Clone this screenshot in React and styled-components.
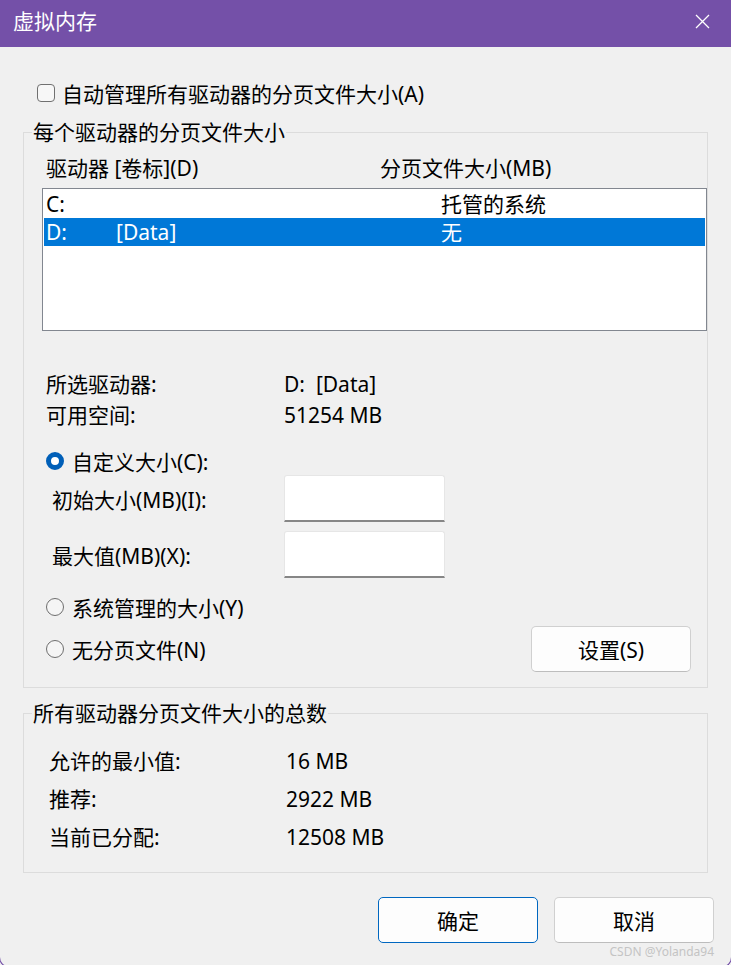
import React from 'react';
import styled, { createGlobalStyle } from 'styled-components';

const GlobalStyle = createGlobalStyle`
  html, body {
    margin: 0;
    padding: 0;
    overflow: hidden;
    background: #f0f0f0;
  }
  body {
    font-family: "Noto Sans", "Noto Sans CJK SC", sans-serif;
    font-size: 21px;
    color: #000;
  }
`;

const Window = styled.div`
  position: relative;
  height: 968px;
  margin: 0 -1px;
  box-sizing: border-box;
  border: 1px solid #7450a8;
  border-top: none;
  border-radius: 0 0 11px 11px;
  background: #f0f0f0;
  display: flex;
  flex-direction: column;
`;

const TitleBar = styled.div`
  height: 47px;
  background: #7450a8;
  color: #fff;
  display: flex;
  align-items: center;
  justify-content: space-between;
  padding: 0 21px 4px 13px;
  box-sizing: border-box;
`;

const Title = styled.span`
  font-size: 21px;
  line-height: 1;
`;

const CloseIcon = () => (
  <svg width="15" height="15" viewBox="0 0 15 15">
    <path d="M1 1L14 14M14 1L1 14" stroke="#fff" strokeWidth="1.3" fill="none" />
  </svg>
);

const Body = styled.div`
  padding: 0 23px;
  display: flex;
  flex-direction: column;
`;

const CheckRow = styled.label`
  display: flex;
  align-items: center;
  gap: 7px;
  height: 28px;
  margin: 32px 0 0 14px;
`;

const CheckBox = styled.span`
  width: 18px;
  height: 18px;
  box-sizing: border-box;
  border: 1px solid #707070;
  border-radius: 4px;
  background: #f7f7f7;
`;

const Group = styled.fieldset`
  margin: ${(p) => p.$top}px 0 0 0;
  padding: 0 0 ${(p) => p.$bottom}px 0;
  border: 1px solid #dcdcdc;
  min-width: 0;
`;

const Legend = styled.legend`
  margin-left: 8px;
  padding: 0 1px;
  height: 26px;
  line-height: 26px;
`;

const ListHeader = styled.div`
  display: grid;
  grid-template-columns: 334px 1fr;
  height: 26px;
  line-height: 26px;
  margin: 10px 0 0 22px;
`;

const ListBox = styled.div`
  margin: 7px 0 0 18px;
  height: 143px;
  box-sizing: border-box;
  border: 1px solid #828790;
  background: #fff;
  padding: 1px;
`;

const DriveRow = styled.div`
  display: grid;
  grid-template-columns: 70px 325px 1fr;
  height: 28px;
  line-height: 28px;
  padding-left: 2px;
  background: ${(p) => (p.$selected ? '#0078d7' : 'transparent')};
  color: ${(p) => (p.$selected ? '#fff' : '#000')};
`;

const InfoRow = styled.div`
  display: grid;
  grid-template-columns: ${(p) => p.$col}px 1fr;
  height: ${(p) => p.$h}px;
  line-height: ${(p) => p.$h}px;
  margin-left: ${(p) => p.$left}px;
  margin-top: ${(p) => p.$top || 0}px;
`;

const RadioRow = styled.div`
  display: flex;
  align-items: center;
  justify-content: space-between;
  height: ${(p) => p.$h}px;
  margin: ${(p) => p.$top}px 16px 0 22px;
`;

const RadioLabel = styled.label`
  display: flex;
  align-items: center;
  gap: 8px;
`;

const Radio = styled.span`
  width: 18px;
  height: 18px;
  box-sizing: border-box;
  border-radius: 50%;
  border: ${(p) => (p.$checked ? '5px solid #005fb8' : '1px solid #6e6e6e')};
  background: ${(p) => (p.$checked ? '#fff' : '#f5f5f5')};
`;

const FieldRow = styled.div`
  display: grid;
  grid-template-columns: 232px 161px;
  align-items: center;
  height: 47px;
  margin: ${(p) => p.$top}px 0 0 28px;
`;

const TextInput = styled.div`
  height: 47px;
  box-sizing: border-box;
  background: #fff;
  border: 1px solid #e6e6e6;
  border-bottom: 2px solid #868686;
  border-radius: 3px 3px 0 0;
`;

const Button = styled.button`
  width: 160px;
  height: 46px;
  box-sizing: border-box;
  background: #fdfdfd;
  border: 1px solid ${(p) => (p.$primary ? '#0067c0' : '#d0d0d0')};
  border-bottom-color: ${(p) => (p.$primary ? '#0067c0' : '#bdbdbd')};
  border-radius: 5px;
  font-family: inherit;
  font-size: 21px;
  color: #000;
  padding: 0;
`;

const Footer = styled.div`
  display: flex;
  justify-content: flex-end;
  gap: 16px;
  margin: 24px -6px 0 0;
`;

const Watermark = styled.span`
  position: absolute;
  right: 17px;
  bottom: 7px;
  font-family: "Noto Sans", sans-serif;
  font-size: 12px;
  color: #c4c4c4;
`;

export default function App() {
  return (
    <>
      <GlobalStyle />
      <Window>
        <TitleBar>
          <Title>虚拟内存</Title>
          <CloseIcon />
        </TitleBar>
        <Body>
          <CheckRow>
            <CheckBox />
            自动管理所有驱动器的分页文件大小(A)
          </CheckRow>

          <Group $top={12} $bottom={15}>
            <Legend>每个驱动器的分页文件大小</Legend>
            <ListHeader>
              <span>驱动器 [卷标](D)</span>
              <span>分页文件大小(MB)</span>
            </ListHeader>
            <ListBox>
              <DriveRow>
                <span>C:</span>
                <span></span>
                <span>托管的系统</span>
              </DriveRow>
              <DriveRow $selected>
                <span>D:</span>
                <span>[Data]</span>
                <span>无</span>
              </DriveRow>
            </ListBox>

            <InfoRow $col={238} $h={31} $left={22} $top={38}>
              <span>所选驱动器:</span>
              <span>D:&nbsp;&nbsp;[Data]</span>
            </InfoRow>
            <InfoRow $col={238} $h={31} $left={22}>
              <span>可用空间:</span>
              <span>51254 MB</span>
            </InfoRow>

            <RadioRow $h={28} $top={16}>
              <RadioLabel>
                <Radio $checked />
                自定义大小(C):
              </RadioLabel>
            </RadioRow>
            <FieldRow $top={0}>
              <span>初始大小(MB)(I):</span>
              <TextInput />
            </FieldRow>
            <FieldRow $top={9}>
              <span>最大值(MB)(X):</span>
              <TextInput />
            </FieldRow>
            <RadioRow $h={28} $top={15}>
              <RadioLabel>
                <Radio />
                系统管理的大小(Y)
              </RadioLabel>
            </RadioRow>
            <RadioRow $h={46} $top={5}>
              <RadioLabel>
                <Radio />
                无分页文件(N)
              </RadioLabel>
              <Button>设置(S)</Button>
            </RadioRow>
          </Group>

          <Group $top={12} $bottom={16}>
            <Legend>所有驱动器分页文件大小的总数</Legend>
            <InfoRow $col={237} $h={38} $left={25} $top={16}>
              <span>允许的最小值:</span>
              <span>16 MB</span>
            </InfoRow>
            <InfoRow $col={237} $h={38} $left={25}>
              <span>推荐:</span>
              <span>2922 MB</span>
            </InfoRow>
            <InfoRow $col={237} $h={38} $left={25}>
              <span>当前已分配:</span>
              <span>12508 MB</span>
            </InfoRow>
          </Group>

          <Footer>
            <Button $primary>确定</Button>
            <Button>取消</Button>
          </Footer>
        </Body>
        <Watermark>CSDN @Yolanda94</Watermark>
      </Window>
    </>
  );
}
